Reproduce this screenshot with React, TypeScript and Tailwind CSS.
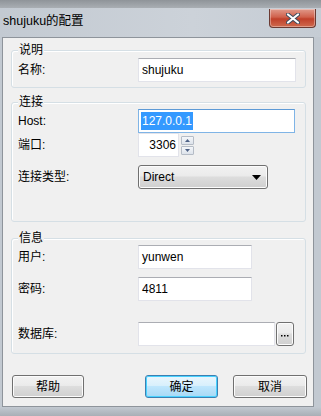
import React from "react";

function GroupBox({ title, className, children }: { title: string; className: string; children: React.ReactNode }) {
  return (
    <div className={`relative w-[295px] rounded-[3px] border border-[#d5dfe5] shadow-[inset_1px_1px_0_#ffffff] ${className}`}>
      <span className="absolute left-[6px] top-[-9px] bg-[#f0f0f0] px-[1px] text-[12px] leading-[16px] text-black">{title}</span>
      {children}
    </div>
  );
}

function Row({ label, children, className = "" }: { label: string; children: React.ReactNode; className?: string }) {
  return (
    <div className={`flex items-center ${className}`}>
      <div className="w-[120px] text-[12px] leading-[16px] text-black">{label}</div>
      {children}
    </div>
  );
}

function TextBox({ value, w, focused = false }: { value: string; w: string; focused?: boolean }) {
  return (
    <div
      className={`flex h-[24px] items-center border bg-white pl-[3px] text-[12px] text-black ${w} ${
        focused ? "border-[#7fb4e6] border-t-[#5d9ad6]" : "border-[#e2e3ea] border-t-[#abadb3]"
      }`}
    >
      {value}
    </div>
  );
}

function WinButton({ label, w, focused = false, className = "" }: { label: string; w: string; focused?: boolean; className?: string }) {
  return (
    <div
      className={`flex h-[23px] items-center justify-center rounded-[3px] border text-[12px] text-black ${w} ${className} ${
        focused
          ? "border-[#3c7fb1] bg-[linear-gradient(#eaf6fd_0%,#d9f0fc_45%,#bee6fd_50%,#a7d9f5_100%)] shadow-[inset_0_0_0_1px_#48d2ff]"
          : "border-[#707070] bg-[linear-gradient(#f2f2f2_0%,#ebebeb_45%,#dddddd_50%,#cfcfcf_100%)] shadow-[inset_0_0_0_1px_#fcfcfc]"
      }`}
    >
      {label}
    </div>
  );
}

export default function App() {
  return (
    <div className="flex h-[416px] w-[321px] flex-col overflow-hidden bg-[#c2c9d1] font-['Liberation_Sans','Noto_Sans_CJK_SC',sans-serif]">
      {/* title bar */}
      <div className="h-[8px] bg-[linear-gradient(#8f9499,#a9aeb3)]" />
      <div className="relative flex h-[29px] items-center bg-[linear-gradient(90deg,#c3cad2,#ccd2d9_60%,#c5ccd4)] pb-[2px] pl-[3px]">
        <span className="text-[12.5px] text-black">shujuku的配置</span>
        <div className="absolute right-[5px] top-[1px] flex h-[19px] w-[47px] items-center justify-center rounded-b-[4px] border border-t-0 border-[#6b3a32] bg-[linear-gradient(#e09a8b_0%,#d0614c_45%,#c0402a_55%,#cf6a4e_100%)] shadow-[inset_0_0_0_1px_rgba(255,255,255,0.35)]">
          <svg width="14" height="11" viewBox="0 0 14 11">
            <path d="M2 1.5 L12 9.5 M12 1.5 L2 9.5" stroke="#3c4a5c" strokeWidth="4" strokeLinecap="round" />
            <path d="M2 1.5 L12 9.5 M12 1.5 L2 9.5" stroke="#ffffff" strokeWidth="2.2" strokeLinecap="round" />
          </svg>
        </div>
      </div>

      {/* client area */}
      <div className="ml-[2px] flex h-[370px] w-[312px] flex-col border border-[#8e949b] bg-[#f0f0f0] pl-[8px] pt-[12px]">
        <GroupBox title="说明" className="h-[38px] pl-[6px] pt-[7px]">
          <Row label="名称:">
            <TextBox value="shujuku" w="w-[158px]" />
          </Row>
        </GroupBox>

        <GroupBox title="连接" className="mt-[14px] h-[120px] pl-[6px] pt-[6px]">
          <Row label="Host:">
            <div className="flex h-[24px] w-[157px] items-center border border-[#7fb4e6] border-t-[#5d9ad6] bg-white pl-[2px] text-[12px]">
              <span className="bg-[#3399ff] px-[1px] leading-[18px] text-white">127.0.0.1</span>
            </div>
          </Row>
          <Row label="端口:">
            <div className="flex h-[24px] w-[41px] items-center justify-end border border-[#e2e3ea] bg-white pr-[2px] text-[12px] text-black">
              3306
            </div>
            <div className="ml-[2px] flex flex-col gap-[1px] pt-[1px]">
              <div className="flex h-[9px] w-[13px] items-center justify-center rounded-[1px] border border-[#b5bcc6] bg-[linear-gradient(#f5f7fa,#dde3eb)]">
                <svg width="5" height="3" viewBox="0 0 5 3"><path d="M2.5 0 L5 3 L0 3 Z" fill="#4d6185" /></svg>
              </div>
              <div className="flex h-[9px] w-[13px] items-center justify-center rounded-[1px] border border-[#b5bcc6] bg-[linear-gradient(#f5f7fa,#dde3eb)]">
                <svg width="5" height="3" viewBox="0 0 5 3"><path d="M0 0 L5 0 L2.5 3 Z" fill="#4d6185" /></svg>
              </div>
            </div>
          </Row>
          <Row label="连接类型:" className="mt-[8px]">
            <div className="flex h-[24px] w-[130px] items-center justify-between rounded-[3px] border border-[#707070] bg-[linear-gradient(#f2f2f2_0%,#ebebeb_45%,#dddddd_50%,#cfcfcf_100%)] pl-[4px] pr-[6px] text-[12px] text-black shadow-[inset_0_0_0_1px_#fcfcfc]">
              <span>Direct</span>
              <svg width="9" height="5" viewBox="0 0 9 5"><path d="M0 0 L9 0 L4.5 5 Z" fill="#000" /></svg>
            </div>
          </Row>
        </GroupBox>

        <GroupBox title="信息" className="mt-[16px] h-[116px] pl-[6px] pt-[6px]">
          <Row label="用户:">
            <TextBox value="yunwen" w="w-[114px]" />
          </Row>
          <Row label="密码:" className="mt-[8px]">
            <TextBox value="4811" w="w-[114px]" />
          </Row>
          <Row label="数据库:" className="mt-[21px]">
            <TextBox value="" w="w-[137px]" />
            <div className="ml-[1px] flex h-[24px] w-[18px] items-end justify-center rounded-[3px] border border-[#707070] bg-[linear-gradient(#f2f2f2_0%,#ebebeb_45%,#dddddd_50%,#cfcfcf_100%)] pb-[8px] shadow-[inset_0_0_0_1px_#fcfcfc]">
              <svg width="8" height="2" viewBox="0 0 8 2">
                <rect x="0" y="0" width="1.5" height="1.5" fill="#000" />
                <rect x="3" y="0" width="1.5" height="1.5" fill="#000" />
                <rect x="6" y="0" width="1.5" height="1.5" fill="#000" />
              </svg>
            </div>
          </Row>
        </GroupBox>

        <div className="mt-[21px] flex">
          <WinButton label="帮助" w="w-[72px]" className="ml-[1px]" />
          <WinButton label="确定" w="w-[73px]" focused className="ml-[61px]" />
          <WinButton label="取消" w="w-[74px]" className="ml-[15px]" />
        </div>
      </div>
      <div className="flex-1 bg-[linear-gradient(#c2c9d1,#a9afb6)]" />
    </div>
  );
}
